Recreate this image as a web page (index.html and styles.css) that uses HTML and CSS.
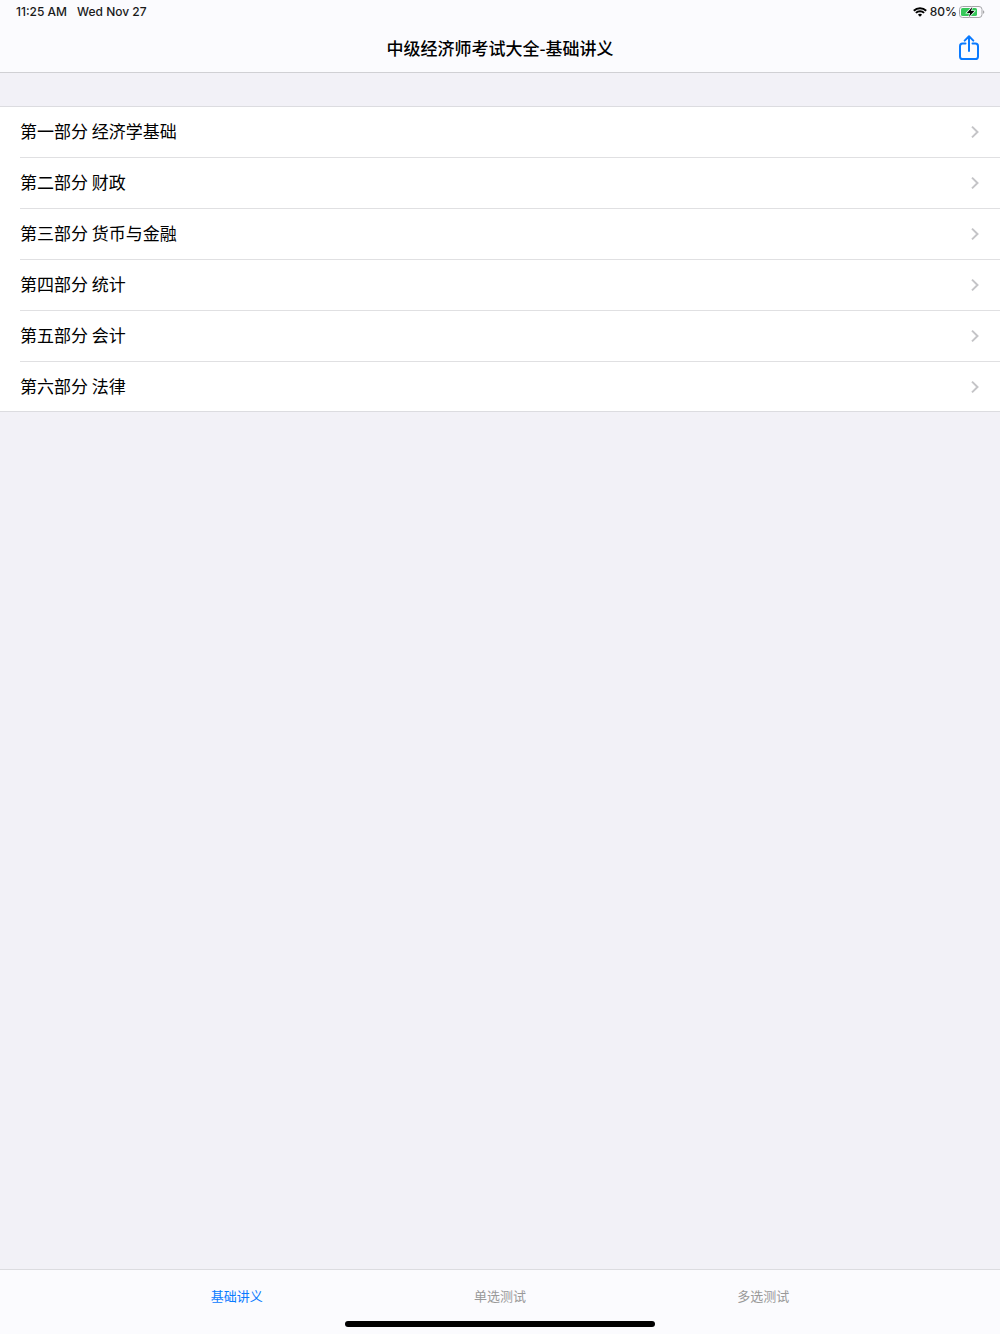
FILE: index.html
```html
<!DOCTYPE html>
<html lang="zh-CN">

<head>
    <meta charset="UTF-8">
    <meta name="viewport" content="width=device-width, initial-scale=1.0">
    <title>中级经济师考试大全</title>
    <link rel="stylesheet" href="styles.css">
</head>

<body>
    <header class="header">
        <div class="status">
            <span>11:25 AM</span>
            <span>Wed Nov 27</span>
            <div class="status-right">
                <svg class="wifi" viewBox="0 0 14 10" width="14" height="10">
                    <path d="M0.8 3.7a8.8 8.8 0 0 1 12.4 0" />
                    <path d="M2.9 5.9a5.8 5.8 0 0 1 8.2 0" />
                    <path class="dot" d="M7 9.8L4.9 7.7a3 3 0 0 1 4.2 0z" />
                </svg>
                <span>80%</span>
                <svg class="battery" viewBox="0 0 26 12" width="26" height="12">
                    <rect class="shell" x="0.5" y="0.5" width="22.5" height="11" rx="3" />
                    <rect class="level" x="2" y="2" width="16" height="8" rx="1.6" />
                    <path class="cap" d="M24 4.2c1.8 0.5 1.8 3.1 0 3.6z" />
                    <path class="bolt" d="M13.3 1L7.8 6.9h3.3L9.9 11l5.5-5.9h-3.3z" />
                </svg>
            </div>
        </div>
        <nav class="navbar">
            <h1>中级经济师考试大全-基础讲义</h1>
            <button class="share" type="button" aria-label="分享">
                <svg viewBox="0 0 20 26" width="20" height="26">
                    <path d="M6.5 8.6H3.6Q1 8.6 1 11.2v10.2Q1 24 3.6 24h12.8q2.6 0 2.6-2.6V11.2q0-2.6-2.6-2.6h-2.9" />
                    <path d="M10 16V1.6M5.7 5.6L10 1.3l4.3 4.3" />
                </svg>
            </button>
        </nav>
    </header>

    <main class="main">
        <ul class="list">
            <li><a href="#part1"><span>第一部分 经济学基础</span><svg class="arrow" viewBox="0 0 8 14" width="8" height="14"><path d="M1 1.6L6.5 7L1 12.4" /></svg></a></li>
            <li><a href="#part2"><span>第二部分 财政</span><svg class="arrow" viewBox="0 0 8 14" width="8" height="14"><path d="M1 1.6L6.5 7L1 12.4" /></svg></a></li>
            <li><a href="#part3"><span>第三部分 货币与金融</span><svg class="arrow" viewBox="0 0 8 14" width="8" height="14"><path d="M1 1.6L6.5 7L1 12.4" /></svg></a></li>
            <li><a href="#part4"><span>第四部分 统计</span><svg class="arrow" viewBox="0 0 8 14" width="8" height="14"><path d="M1 1.6L6.5 7L1 12.4" /></svg></a></li>
            <li><a href="#part5"><span>第五部分 会计</span><svg class="arrow" viewBox="0 0 8 14" width="8" height="14"><path d="M1 1.6L6.5 7L1 12.4" /></svg></a></li>
            <li><a href="#part6"><span>第六部分 法律</span><svg class="arrow" viewBox="0 0 8 14" width="8" height="14"><path d="M1 1.6L6.5 7L1 12.4" /></svg></a></li>
        </ul>
    </main>

    <footer class="footer">
        <nav class="tabs">
            <a class="active" href="#notes">基础讲义</a>
            <a href="#single">单选测试</a>
            <a href="#multiple">多选测试</a>
        </nav>
        <div class="home-bar"></div>
    </footer>
</body>

</html>
```

FILE: styles.css
```css
* {
    margin: 0;
    padding: 0;
    list-style: none;
    box-sizing: border-box;
}

body {
    min-height: 100vh;
    display: flex;
    flex-direction: column;
    font-family: "Noto Sans CJK SC", sans-serif;
    font-size: 17px;
    color: #000;
    background: #f2f1f7;
}

a {
    color: inherit;
    text-decoration: none;
}

svg {
    display: block;
    fill: none;
}

.header {
    background: #fbfbfe;
    border-bottom: 1px solid #d0d0d4;
}

/* 状态栏 */
.status {
    height: 24px;
    padding: 0 15px 1px 16px;
    display: flex;
    align-items: center;
    gap: 10px;
    font-family: Inter, sans-serif;
    font-size: 12px;
    font-weight: 500;
    color: #1a1a1a;
}

.status-right {
    margin-left: auto;
    display: flex;
    align-items: center;
    gap: 2px;
}

.wifi {
    margin-right: 1px;
    stroke: #000;
    stroke-width: 2;
}

.wifi .dot {
    fill: #000;
    stroke: none;
}

.battery .shell {
    stroke: #a5a5a8;
}

.battery .level {
    fill: #35c759;
}

.battery .cap {
    fill: #a5a5a8;
}

.battery .bolt {
    fill: #000;
    stroke: #fbfbfe;
    stroke-width: 1.4;
    paint-order: stroke;
}

/* 标题栏 */
.navbar {
    height: 48px;
    padding: 0 21px 2px;
    display: grid;
    grid-template-columns: 1fr auto 1fr;
    align-items: center;
}

.navbar h1 {
    grid-column: 2;
    font-size: 17px;
    font-weight: 500;
}

.share {
    justify-self: end;
    padding-top: 2px;
    border: none;
    background: none;
    cursor: pointer;
}

.share svg {
    stroke: #0a7aff;
    stroke-width: 2;
    stroke-linecap: round;
    stroke-linejoin: round;
}

/* 章节列表 */
.main {
    flex: 1;
    padding-top: 33px;
}

.list {
    background: #fff;
    border-top: 1px solid #dcdce0;
    border-bottom: 1px solid #dcdce0;
}

.list li {
    padding-left: 20px;
}

.list a {
    height: 51px;
    padding-right: 21px;
    display: flex;
    align-items: center;
    justify-content: space-between;
    border-bottom: 1px solid #e0e0e2;
}

.list span {
    padding-bottom: 3px;
}

.list li:last-child a {
    height: 49px;
    border-bottom: none;
}

.arrow {
    stroke: #c4c4c7;
    stroke-width: 2;
}

/* 底部标签 */
.footer {
    padding-bottom: 7px;
    background: #fbfbfe;
    border-top: 1px solid #dcdce0;
}

.tabs {
    width: 79%;
    height: 51px;
    padding-bottom: 1px;
    margin: 0 auto;
    display: grid;
    grid-template-columns: repeat(3, 1fr);
    align-items: center;
    text-align: center;
    font-size: 13px;
    color: #999;
}

.tabs .active {
    color: #0a7aff;
}

.home-bar {
    width: 31%;
    height: 6px;
    margin: 0 auto;
    border-radius: 3px;
    background: #000;
}
```
